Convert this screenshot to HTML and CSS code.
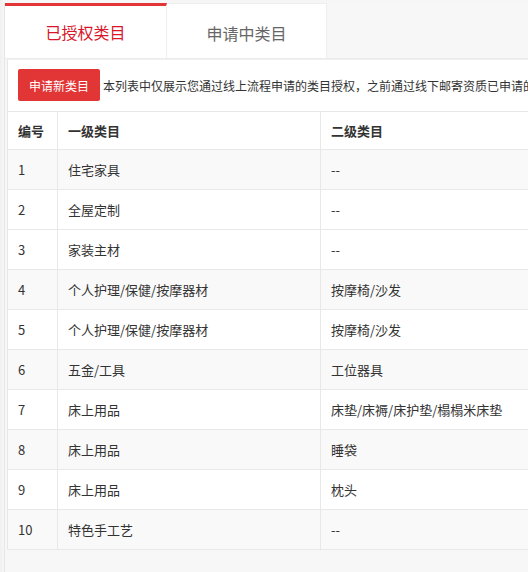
FILE: index.html
```html
<!DOCTYPE html>
<html lang="zh-CN">
<head>
<meta charset="utf-8">
<title>类目管理</title>
<link rel="stylesheet" href="styles.css">
</head>
<body>
<div class="page">
  <div class="frame">
    <div class="tabs">
      <div class="tab active">已授权类目</div>
      <div class="tab">申请中类目</div>
    </div>
    <div class="card">
      <div class="toolbar">
        <button class="btn">申请新类目</button><span class="notice">本列表中仅展示您通过线上流程申请的类目授权，之前通过线下邮寄资质已申请的类目请联系招商经理查询</span>
      </div>
      <table class="grid">
        <thead>
          <tr><th class="c1">编号</th><th class="c2">一级类目</th><th class="c3">二级类目</th></tr>
        </thead>
        <tbody>
          <tr class="alt"><td>1</td><td>住宅家具</td><td>--</td></tr>
          <tr><td>2</td><td>全屋定制</td><td>--</td></tr>
          <tr><td>3</td><td>家装主材</td><td>--</td></tr>
          <tr class="alt"><td>4</td><td>个人护理/保健/按摩器材</td><td>按摩椅/沙发</td></tr>
          <tr><td>5</td><td>个人护理/保健/按摩器材</td><td>按摩椅/沙发</td></tr>
          <tr class="alt"><td>6</td><td>五金/工具</td><td>工位器具</td></tr>
          <tr><td>7</td><td>床上用品</td><td>床垫/床褥/床护垫/榻榻米床垫</td></tr>
          <tr class="alt"><td>8</td><td>床上用品</td><td>睡袋</td></tr>
          <tr><td>9</td><td>床上用品</td><td>枕头</td></tr>
          <tr class="alt"><td>10</td><td>特色手工艺</td><td>--</td></tr>
        </tbody>
      </table>
    </div>
  </div>
</div>
</body>
</html>
```

FILE: styles.css
```css
html, body {
  margin: 0;
  padding: 0;
  background: #f4f4f4;
  overflow: hidden;
  font-family: "Noto Sans CJK SC", "Noto Sans", sans-serif;
  color: #333;
}

.page {
  padding: 3px 0 0 4px;
  width: 820px;
  height: 572px;
  background: linear-gradient(to right, #f0f0f0, #f6f6f6 4px, #f6f6f6);
}

.frame {
  border-left: 1px solid #e6e6e6;
  background: #f7f7f7;
  height: 100%;
}

.tabs {
  display: flex;
  height: 55px;
  border-bottom: 1px solid #ececec;
}

.tab {
  width: 160px;
  box-sizing: border-box;
  background: #fff;
  display: flex;
  align-items: center;
  justify-content: center;
  font-size: 16px;
  color: #666;
  border-top: 1px solid #eeeeee;
  border-right: 1px solid #eeeeee;
  padding-top: 3px;
}

.tab.active {
  width: 162px;
  color: #d7152b;
  border-top: 3px solid #e23535;
  border-right: 1px solid #eeeeee;
  padding-top: 0;
}

.card {
  margin-left: 2px;
  background: #fff;
  border-left: 1px solid #e8e8e8;
  border-top: 1px solid #f0f0f0;
}

.toolbar {
  padding: 9px 10px 10px;
  border-bottom: 1px solid #e8e8e8;
  white-space: nowrap;
  display: flex;
  align-items: center;
}

.btn {
  width: 82px;
  height: 32px;
  border: none;
  border-radius: 2px;
  background: #e23535;
  color: #fff;
  font-family: inherit;
  font-size: 12px;
  padding: 0;
  margin-right: 3px;
  cursor: pointer;
}

.notice {
  font-size: 12px;
  color: #333;
}

.grid {
  border-collapse: collapse;
  width: 100%;
  table-layout: fixed;
  font-size: 13px;
}

.grid th, .grid td {
  text-align: left;
  padding: 0 10px;
  border-right: 1px solid #e8e8e8;
  border-bottom: 1px solid #e8e8e8;
  white-space: nowrap;
}

.grid th {
  height: 37px;
  font-weight: 700;
  color: #333;
  background: #fff;
}

.grid td {
  height: 39px;
  color: #333;
}

.grid .c1 { width: 29px; }
.grid .c2 { width: 242px; }

.grid tr.alt td {
  background: #f9f9f9;
}
```
